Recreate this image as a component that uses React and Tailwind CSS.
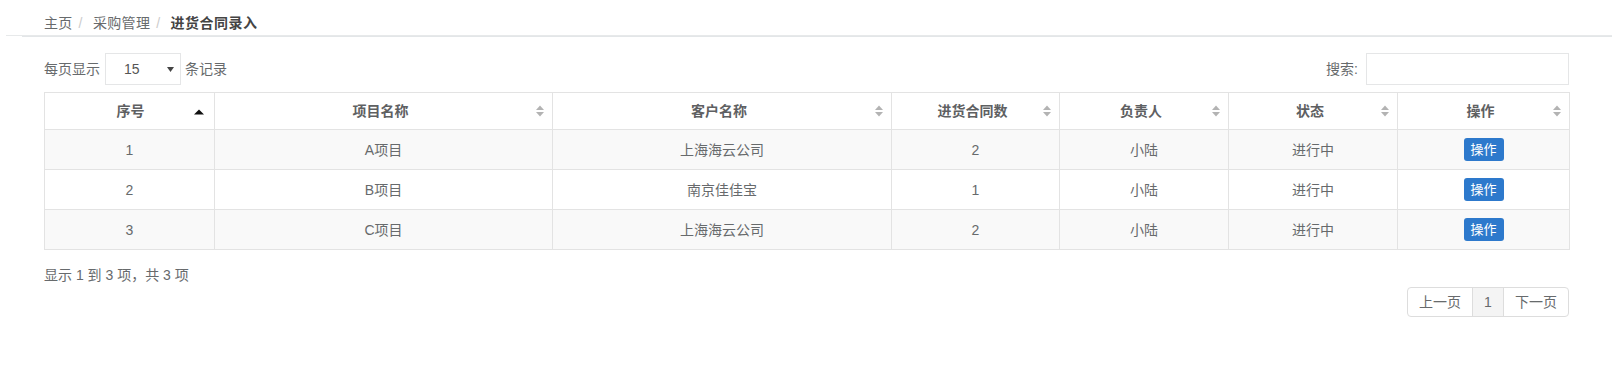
import React from 'react';

const rows = [
  { id: 1, project: 'A项目', customer: '上海海云公司', count: 2, owner: '小陆', status: '进行中' },
  { id: 2, project: 'B项目', customer: '南京佳佳宝', count: 1, owner: '小陆', status: '进行中' },
  { id: 3, project: 'C项目', customer: '上海海云公司', count: 2, owner: '小陆', status: '进行中' },
];

const SortBoth = () => (
  <svg width="8" height="12" viewBox="0 0 8 12" className="absolute right-[8px] top-[12px]">
    <path d="M0 5 L4 0.5 L8 5 Z" fill="#b3b3b3" />
    <path d="M0 7 L8 7 L4 11.5 Z" fill="#b3b3b3" />
  </svg>
);

const SortAsc = () => (
  <svg width="10" height="6" viewBox="0 0 10 6" className="absolute right-[10px] top-[16px]">
    <path d="M0 5.5 L5 0.5 L10 5.5 Z" fill="#111" />
  </svg>
);

const Th = ({ children, asc, first }) => (
  <th
    className={`relative border border-[#e3e3e3] py-2 font-bold text-[#5e6062] text-center leading-5 ${
      first ? 'pl-[12px] pr-[10px]' : 'pl-[10px] pr-[16px]'
    }`}
  >
    {children}
    {asc ? <SortAsc /> : <SortBoth />}
  </th>
);

const Td = ({ children }) => (
  <td className="border border-[#e3e3e3] py-2 px-2 text-center leading-5">{children}</td>
);

export default function App() {
  return (
    <div className="bg-white min-h-[372px] text-[14px] text-[#676a6c] font-['Liberation_Sans','Noto_Sans_CJK_SC',sans-serif]">
      {/* breadcrumb */}
      <div className="ml-[6px] border-b border-[#e7e9ea]">
        <div className="pl-[38px] pt-[13px] pb-[2px] leading-5 flex items-center tracking-[0.3px]">
          <span>主页</span>
          <span className="px-[6px] text-[#cccccc]">/&nbsp;</span>
          <span>采购管理</span>
          <span className="px-[6px] text-[#cccccc]">/&nbsp;</span>
          <span className="font-bold text-[#444] tracking-[0.5px]">进货合同录入</span>
        </div>
      </div>
      <div className="ml-[22px] h-px bg-[#e3e6e8]"></div>

      <div className="pl-[44px] pr-[43px]">
        {/* length + search */}
        <div className="mt-[16px] h-[32px] flex items-center justify-between">
          <div className="flex items-center leading-5">
            <span>每页显示</span>
            <div className="ml-[5px] mr-[4px] w-[76px] h-[32px] border border-[#e5e6e7] flex items-center justify-between pl-[18px] pr-[6px] text-[#555]">
              <span>15</span>
              <svg width="7" height="5" viewBox="0 0 7 5">
                <path d="M0 0 L7 0 L3.5 5 Z" fill="#444" />
              </svg>
            </div>
            <span>条记录</span>
          </div>
          <div className="flex items-center leading-5">
            <span>搜索:</span>
            <input className="ml-2 w-[203px] h-[32px] border border-[#e5e6e7] outline-none px-3" />
          </div>
        </div>

        {/* table */}
        <table className="mt-[7px] w-[1525px] table-fixed border-collapse">
          <colgroup>
            <col className="w-[170px]" />
            <col className="w-[338px]" />
            <col className="w-[339px]" />
            <col className="w-[168px]" />
            <col className="w-[169px]" />
            <col className="w-[169px]" />
            <col className="w-[172px]" />
          </colgroup>
          <thead>
            <tr className="bg-white">
              <Th asc first>序号</Th>
              <Th>项目名称</Th>
              <Th>客户名称</Th>
              <Th>进货合同数</Th>
              <Th>负责人</Th>
              <Th>状态</Th>
              <Th>操作</Th>
            </tr>
          </thead>
          <tbody>
            {rows.map((r, i) => (
              <tr key={r.id} className={i % 2 === 0 ? 'bg-[#f9f9f9]' : 'bg-white'}>
                <Td>{r.id}</Td>
                <Td>{r.project}</Td>
                <Td>{r.customer}</Td>
                <Td>{r.count}</Td>
                <Td>{r.owner}</Td>
                <Td>{r.status}</Td>
                <td className="border border-[#e3e3e3] py-2 px-2 text-center leading-5">
                  <button className="inline-flex items-center justify-center w-[40px] h-[23px] rounded-[3px] bg-[#2d79cc] text-white text-[13px] align-middle">
                    操作
                  </button>
                </td>
              </tr>
            ))}
          </tbody>
        </table>

        {/* info + pagination */}
        <div className="mt-[15px] leading-5">显示 1 到 3 项，共 3 项</div>
        <div className="mt-[2px] flex justify-end">
          <div className="flex h-[30px] border border-[#dddddd] rounded-[4px] overflow-hidden leading-[28px]">
            <span className="w-[64px] text-center">上一页</span>
            <span className="w-[31px] text-center border-l border-[#dddddd] bg-[#f4f4f4]">1</span>
            <span className="w-[65px] text-center border-l border-[#dddddd]">下一页</span>
          </div>
        </div>
      </div>
    </div>
  );
}
